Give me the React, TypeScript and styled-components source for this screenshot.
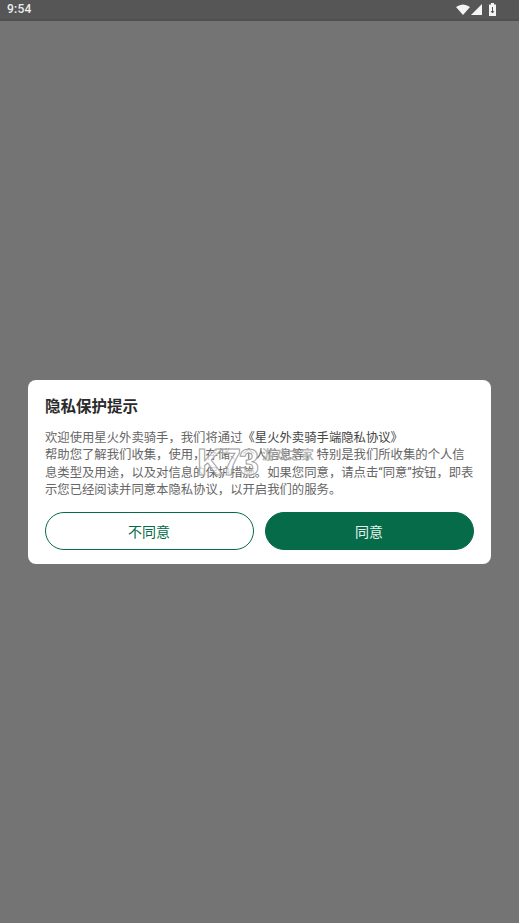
import React from 'react';
import styled, { createGlobalStyle } from 'styled-components';

const GlobalStyle = createGlobalStyle`
  html, body {
    margin: 0;
    padding: 0;
    height: 100%;
    overflow: hidden;
  }
  #root {
    height: 100%;
  }
`;

const Screen = styled.div`
  display: flex;
  flex-direction: column;
  height: 923px;
  background-color: #747474;
  font-family: Roboto, "Noto Sans CJK SC", sans-serif;
`;

const StatusBar = styled.div`
  display: flex;
  align-items: center;
  justify-content: space-between;
  flex: 0 0 21px;
  box-sizing: border-box;
  height: 21px;
  padding: 0 22px 1px 7px;
  background-color: #565656;
  border-bottom: 2px solid #505050;
`;

const Clock = styled.span`
  color: #eeeeee;
  font-size: 12px;
  font-weight: 500;
  letter-spacing: 0.2px;
`;

const StatusIcons = styled.div`
  display: flex;
  align-items: center;
  gap: 1px;
`;

const Backdrop = styled.div`
  flex: 1;
  display: flex;
  justify-content: center;
  padding-top: 359px;
`;

const Dialog = styled.div`
  position: relative;
  box-sizing: border-box;
  width: 463px;
  height: 184px;
  padding: 17px 17px 14px;
  background-color: #ffffff;
  border-radius: 8px;
`;

const Title = styled.h2`
  margin: 0 0 12.5px;
  color: #2b2b2b;
  font-size: 15.5px;
  line-height: 20px;
  font-weight: 700;
`;

const Body = styled.p`
  margin: 0 0 12.5px;
  color: #666666;
  font-size: 12.35px;
  line-height: 17.6px;
`;

const Strong = styled.span`
  color: #444444;
`;

const Actions = styled.div`
  display: flex;
  gap: 11px;
`;

const ActionButton = styled.button<{ $primary?: boolean }>`
  flex: 1;
  height: 38px;
  padding: 0 1px 0 0;
  border-radius: 19px;
  border: 1px solid #056b49;
  background-color: ${(p) => (p.$primary ? '#056b49' : '#ffffff')};
  color: ${(p) => (p.$primary ? '#e4f2ec' : '#056b49')};
  font-family: inherit;
  font-size: 14px;
`;

const Watermark = styled.div`
  position: absolute;
  left: 169px;
  top: 64px;
  display: flex;
  align-items: flex-start;
  pointer-events: none;
`;

const WatermarkLogo = styled.span`
  color: rgba(255, 255, 255, 0.7);
  font-family: "Liberation Sans", sans-serif;
  font-size: 36px;
  line-height: 38px;
  font-weight: 700;
  letter-spacing: -2px;
  -webkit-text-stroke: 1px #a0a0a0;
`;

const WatermarkName = styled.span`
  margin: 3px 0 0 5px;
  color: rgba(165, 165, 165, 0.8);
  font-size: 13px;
  line-height: 16px;
  font-weight: 700;
`;

const App = () => (
  <>
    <GlobalStyle />
    <Screen>
      <StatusBar>
        <Clock>9:54</Clock>
        <StatusIcons>
          <svg width="14" height="11" viewBox="0 0 14 11">
            <path d="M0 3 Q7 -2 14 3 L7 11 Z" fill="#f4f4f4" />
          </svg>
          <svg width="11" height="11" viewBox="0 0 11 11">
            <path d="M11 0 V11 H0 Z" fill="#f4f4f4" />
          </svg>
          <svg width="9" height="13" viewBox="0 0 9 13" style={{ marginLeft: 5 }}>
            <path d="M3 0 H6 V1.5 H8 V13 H1 V1.5 H3 Z" fill="#f4f4f4" />
            <path d="M4.5 4 V10 M3 8 L4.5 10 L6 8" stroke="#565656" strokeWidth="1" fill="none" />
          </svg>
        </StatusIcons>
      </StatusBar>
      <Backdrop>
        <Dialog>
          <Title>隐私保护提示</Title>
          <Body>
            欢迎使用星火外卖骑手，我们将通过<Strong>《星火外卖骑手端隐私协议》</Strong>
            <br />
            帮助您了解我们收集，使用，存储、个人信息等，特别是我们所收集的个人信息类型及用途，以及对信息的保护措施。如果您同意，请点击“同意”按钮，即表示您已经阅读并同意本隐私协议，以开启我们的服务。
          </Body>
          <Actions>
            <ActionButton>不同意</ActionButton>
            <ActionButton $primary>同意</ActionButton>
          </Actions>
          <Watermark>
            <WatermarkLogo>K73</WatermarkLogo>
            <WatermarkName>游戏之家</WatermarkName>
          </Watermark>
        </Dialog>
      </Backdrop>
    </Screen>
  </>
);

export default App;
